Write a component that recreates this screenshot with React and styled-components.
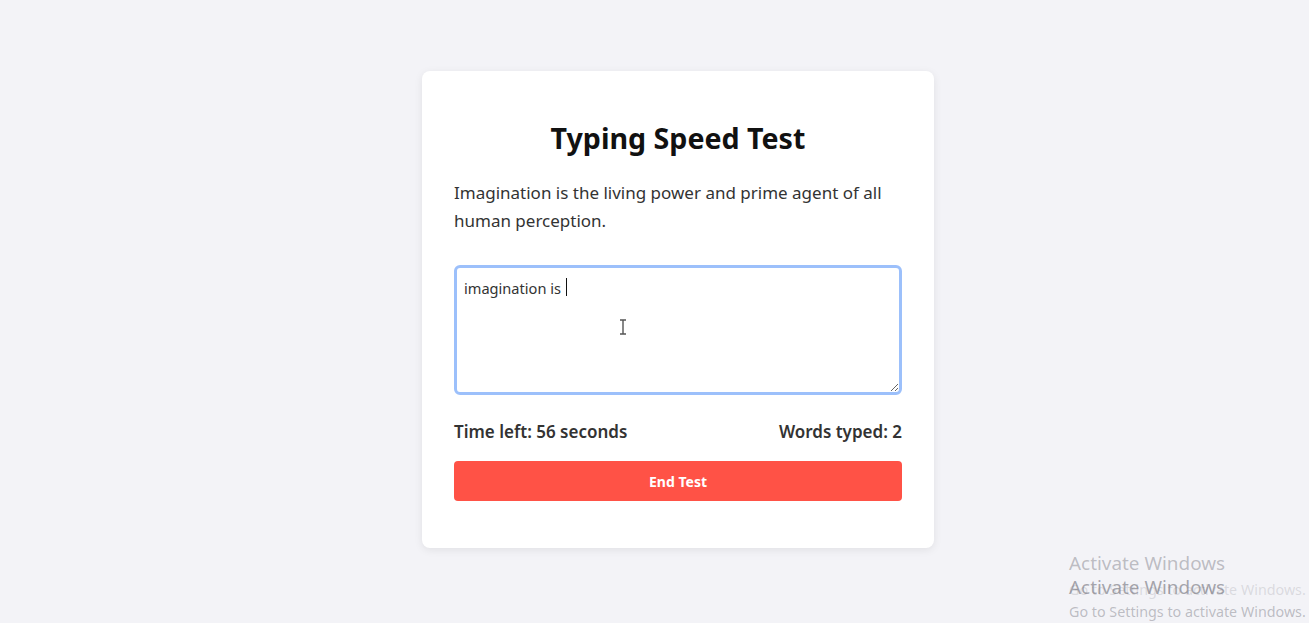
import styled, { createGlobalStyle } from "styled-components";

const GlobalStyle = createGlobalStyle`
  * { box-sizing: border-box; }
  html, body { margin: 0; padding: 0; }
  body {
    background: #f3f3f7;
    font-family: "Noto Sans", "Open Sans", sans-serif;
    color: #222;
  }
`

const Page = styled.div`
  height: 623px;
  display: flex;
  align-items: center;
  justify-content: center;
  position: relative;
  overflow: hidden;
`

const Card = styled.div`
  width: 512px;
  margin-left: 47px;
  margin-top: -4px;
  background: #ffffff;
  border-radius: 8px;
  box-shadow: 0 2px 8px rgba(0, 0, 0, 0.08);
  padding: 48px 32px 47px;
  display: flex;
  flex-direction: column;
`

const Title = styled.h1`
  margin: 0 0 22px;
  font-size: 28.6px;
  font-weight: 700;
  text-align: center;
  color: #111;
  line-height: 38px;
`

const Quote = styled.p`
  margin: 0 0 30px;
  font-size: 17px;
  line-height: 28px;
  color: #333;
`

const InputWrap = styled.div`
  position: relative;
`

const TypingArea = styled.textarea`
  display: block;
  width: 100%;
  height: 130px;
  padding: 10px 7px;
  font-family: "Noto Sans", "Open Sans", sans-serif;
  font-size: 14.6px;
  color: #333;
  border: 3px solid #9cc0fb;
  border-radius: 6px;
  outline: none;
  resize: vertical;
`

const Caret = styled.span`
  position: absolute;
  left: 112px;
  top: 13px;
  width: 1px;
  height: 18px;
  background: #111;
`

const Pointer = styled.svg`
  position: absolute;
  left: 165px;
  top: 54px;
`

const Stats = styled.div`
  display: flex;
  justify-content: space-between;
  margin: 25px 0 18px;
  font-size: 17px;
  font-weight: 600;
  color: #333;
`

const EndButton = styled.button`
  height: 40px;
  border: none;
  border-radius: 4px;
  background: #ff5246;
  color: #fff;
  font-family: "Noto Sans", "Open Sans", sans-serif;
  font-size: 14px;
  font-weight: 700;
  cursor: pointer;
`

const Watermark = styled.div`
  position: absolute;
  left: 1069px;
  top: 554px;
  font-family: "Noto Sans", sans-serif;
  line-height: 1;
  display: grid;
`

const WmLine = styled.div`
  font-size: ${p => p.$big ? "18.9px" : "14.3px"};
  color: ${p => p.$tone || "rgba(120, 120, 130, 0.45)"};
  grid-area: ${p => p.$row} / 1;
  align-self: ${p => p.$big ? "start" : "end"};
  margin-top: ${p => p.$top || 0}px;
`

const App = () => {
  return (
    <Page>
      <GlobalStyle />
      <Card>
        <Title>Typing Speed Test</Title>
        <Quote>Imagination is the living power and prime agent of all human perception.</Quote>
        <InputWrap>
          <TypingArea autoFocus defaultValue="imagination is " />
          <Caret />
          <Pointer width="8" height="16" viewBox="0 0 8 16">
            <path d="M1 1h6M4 1v14M1 15h6" stroke="#555" strokeWidth="1.4" fill="none" />
          </Pointer>
        </InputWrap>
        <Stats>
          <span>Time left: 56 seconds</span>
          <span>Words typed: 2</span>
        </Stats>
        <EndButton>End Test</EndButton>
      </Card>
      <Watermark>
        <WmLine $big $row={1}>Activate Windows</WmLine>
        <WmLine $row={2} $top={7} $tone="rgba(140, 140, 150, 0.25)">Go to Settings to activate Windows.</WmLine>
        <WmLine $big $row={2} $top={5} $tone="rgba(110, 110, 120, 0.6)">Activate Windows</WmLine>
        <WmLine $row={3} $top={8}>Go to Settings to activate Windows.</WmLine>
      </Watermark>
    </Page>
  )
}

export default App;
